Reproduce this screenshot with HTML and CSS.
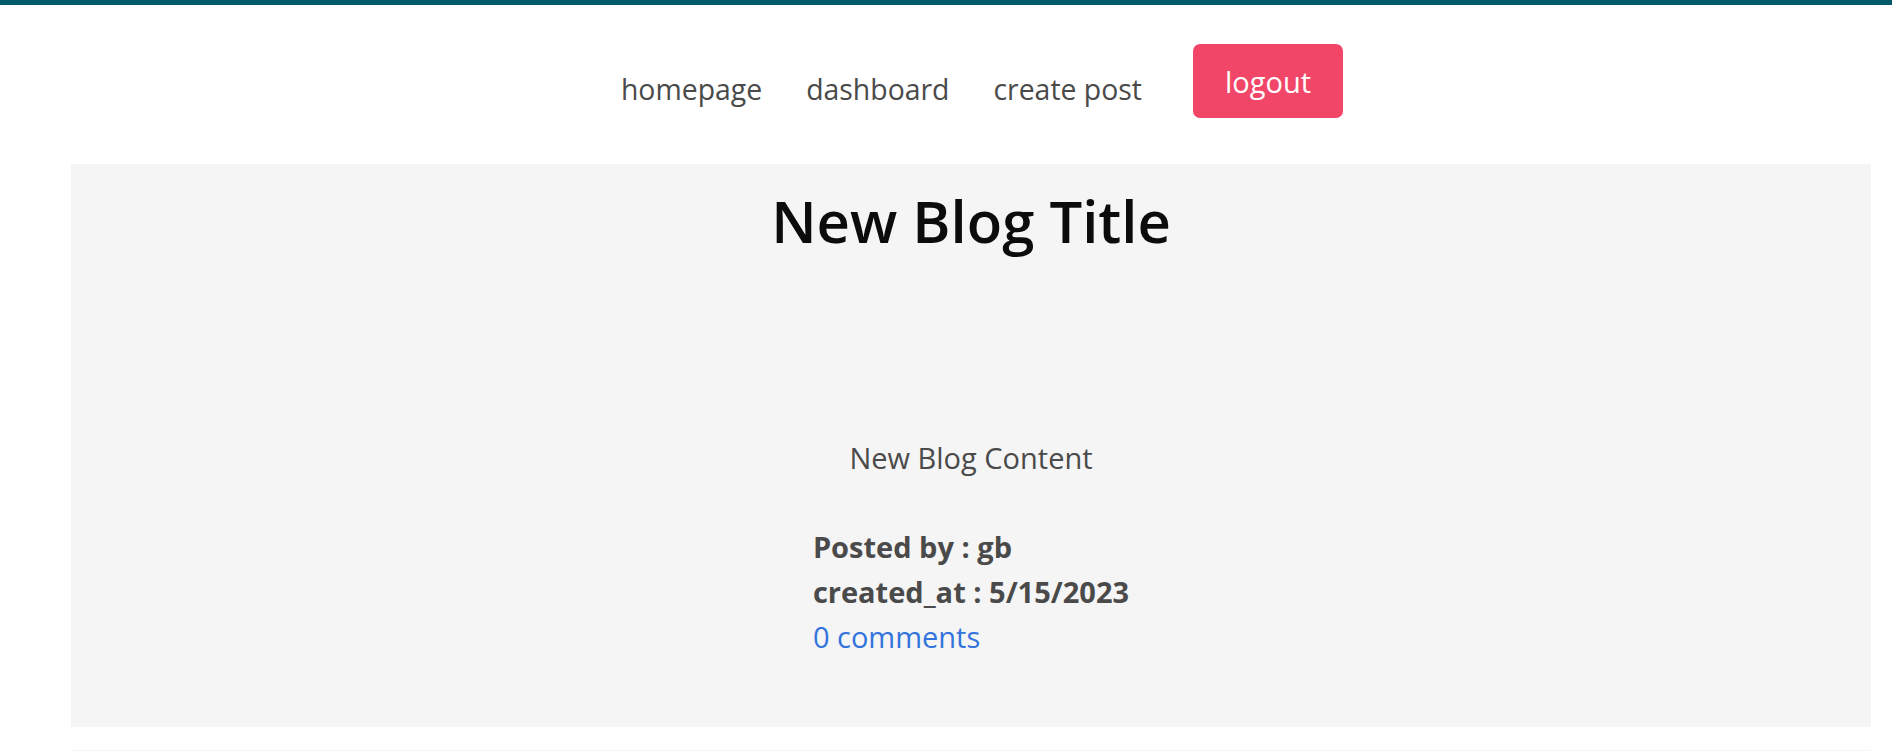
FILE: index.html
```html
<!DOCTYPE html>
<html lang="en">
<head>
<meta charset="utf-8">
<title>Blog</title>
<link rel="stylesheet" href="styles.css">
</head>
<body>
<div class="topbar"></div>
<div class="page">
  <nav class="nav">
    <a class="nav-link" href="#">homepage</a>
    <a class="nav-link" href="#">dashboard</a>
    <a class="nav-link" href="#">create post</a>
    <button class="btn-logout" type="button">logout</button>
  </nav>
  <main class="posts">
    <article class="post">
      <h1 class="post-title">New Blog Title</h1>
      <p class="post-content">New Blog Content</p>
      <div class="post-meta">
        <div class="meta-line">Posted by : gb</div>
        <div class="meta-line">created_at : 5/15/2023</div>
        <a class="meta-link" href="#">0 comments</a>
      </div>
    </article>
    <article class="post post-next"></article>
  </main>
</div>
</body>
</html>
```

FILE: styles.css
```css
* { box-sizing: border-box; }
html, body { margin: 0; padding: 0; background: #ffffff; }
body {
  font-family: "Open Sans", "Noto Sans", sans-serif;
  color: #4a4a4a;
  font-size: 29px;
  line-height: 1.5;
  overflow: hidden;
}
.topbar {
  height: 5px;
  background: #035a6b;
}
.page {
  padding-left: 50px;
}
.nav {
  display: flex;
  justify-content: center;
  align-items: flex-start;
  padding-top: 39px;
}
.nav-link {
  color: #4a4a4a;
  text-decoration: none;
  font-size: 28.4px;
  padding: 0 22px;
  margin-top: 24px;
  line-height: 43.5px;
}
.btn-logout {
  margin-left: 29px;
  height: 74px;
  padding: 0 32px;
  border: none;
  border-radius: 7px;
  background: #f14668;
  color: #ffffff;
  font-family: inherit;
  font-size: 29px;
  line-height: 1;
  display: flex;
  align-items: center;
}
.posts {
  width: 1800px;
  margin: 46px auto 0;
}
.post {
  background: #f5f5f5;
  padding: 24px 0 68px;
  text-align: center;
}
.post-title {
  margin: 0;
  font-size: 58px;
  font-weight: 600;
  line-height: 66px;
  color: #0c0c0c;
}
.post-content {
  margin: 181px 0 0;
  line-height: 45px;
}
.post-meta {
  display: inline-block;
  text-align: left;
  margin-top: 44px;
  line-height: 45px;
}
.meta-line {
  font-weight: 700;
}
.meta-link {
  color: #3273dc;
  text-decoration: none;
}
.post-next {
  margin-top: 23px;
  height: 200px;
  padding: 0;
}
```
